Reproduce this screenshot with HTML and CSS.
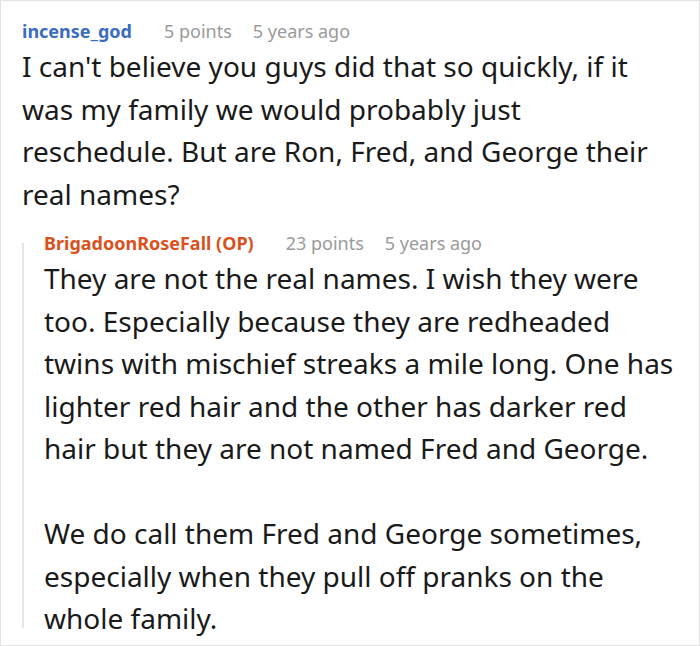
FILE: index.html
```html
<!DOCTYPE html>
<html lang="en">
<head>
    <meta charset="UTF-8">
    <meta name="viewport" content="width=device-width, initial-scale=1.0">
    <title>Comment thread</title>
    <link rel="stylesheet" href="styles.css">
</head>
<body>
    <div class="thread">
        <div class="comment">
            <div class="meta">
                <span class="author">incense_god</span>
                <span class="points">5 points</span>
                <span class="time">5 years ago</span>
            </div>
            <div class="body">
                <p>I can't believe you guys did that so quickly, if it was my family we would probably just reschedule. But are Ron, Fred, and George their real names?</p>
            </div>

            <div class="comment reply">
                <div class="meta">
                    <span class="author op">BrigadoonRoseFall (OP)</span>
                    <span class="points">23 points</span>
                    <span class="time">5 years ago</span>
                </div>
                <div class="body">
                    <p>They are not the real names. I wish they were too. Especially because they are redheaded twins with mischief streaks a mile long. One has lighter red hair and the other has darker red hair but they are not named Fred and George.</p>
                    <p>We do call them Fred and George sometimes, especially when they pull off pranks on the whole family.</p>
                </div>
            </div>
        </div>
    </div>
</body>
</html>
```

FILE: styles.css
```css
html, body {
    margin: 0;
    padding: 0;
}
body {
    font-family: 'Noto Sans', 'Open Sans', sans-serif;
    color: #1a1a1a;
    background-color: #fff;
}
.thread {
    box-sizing: border-box;
    width: 700px;
    height: 646px;
    border: 1px solid #e2e2e2;
    padding: 16px 20px 0 21px;
    overflow: hidden;
}
.meta {
    display: flex;
    align-items: baseline;
    font-size: 18px;
    line-height: 28px;
}
.author {
    font-weight: bold;
    color: #3a6cbf;
    margin-right: 32px;
}
.author.op {
    color: #d9521e;
}
.points {
    color: #9a9a9a;
    margin-right: 21px;
}
.time {
    color: #9a9a9a;
}
.body {
    font-size: 28px;
    line-height: 42.5px;
}
.body p {
    margin: 0 0 42.5px 0;
}
.body p:last-child {
    margin-bottom: 0;
}
/* nested reply, with the thread line down its left side */
.reply {
    position: relative;
    margin-top: 14px;
    padding-left: 22px;
}
.reply::before {
    content: "";
    position: absolute;
    left: 0;
    top: 14px;
    bottom: 12px;
    width: 2px;
    background-color: #e6e6e6;
}
```
